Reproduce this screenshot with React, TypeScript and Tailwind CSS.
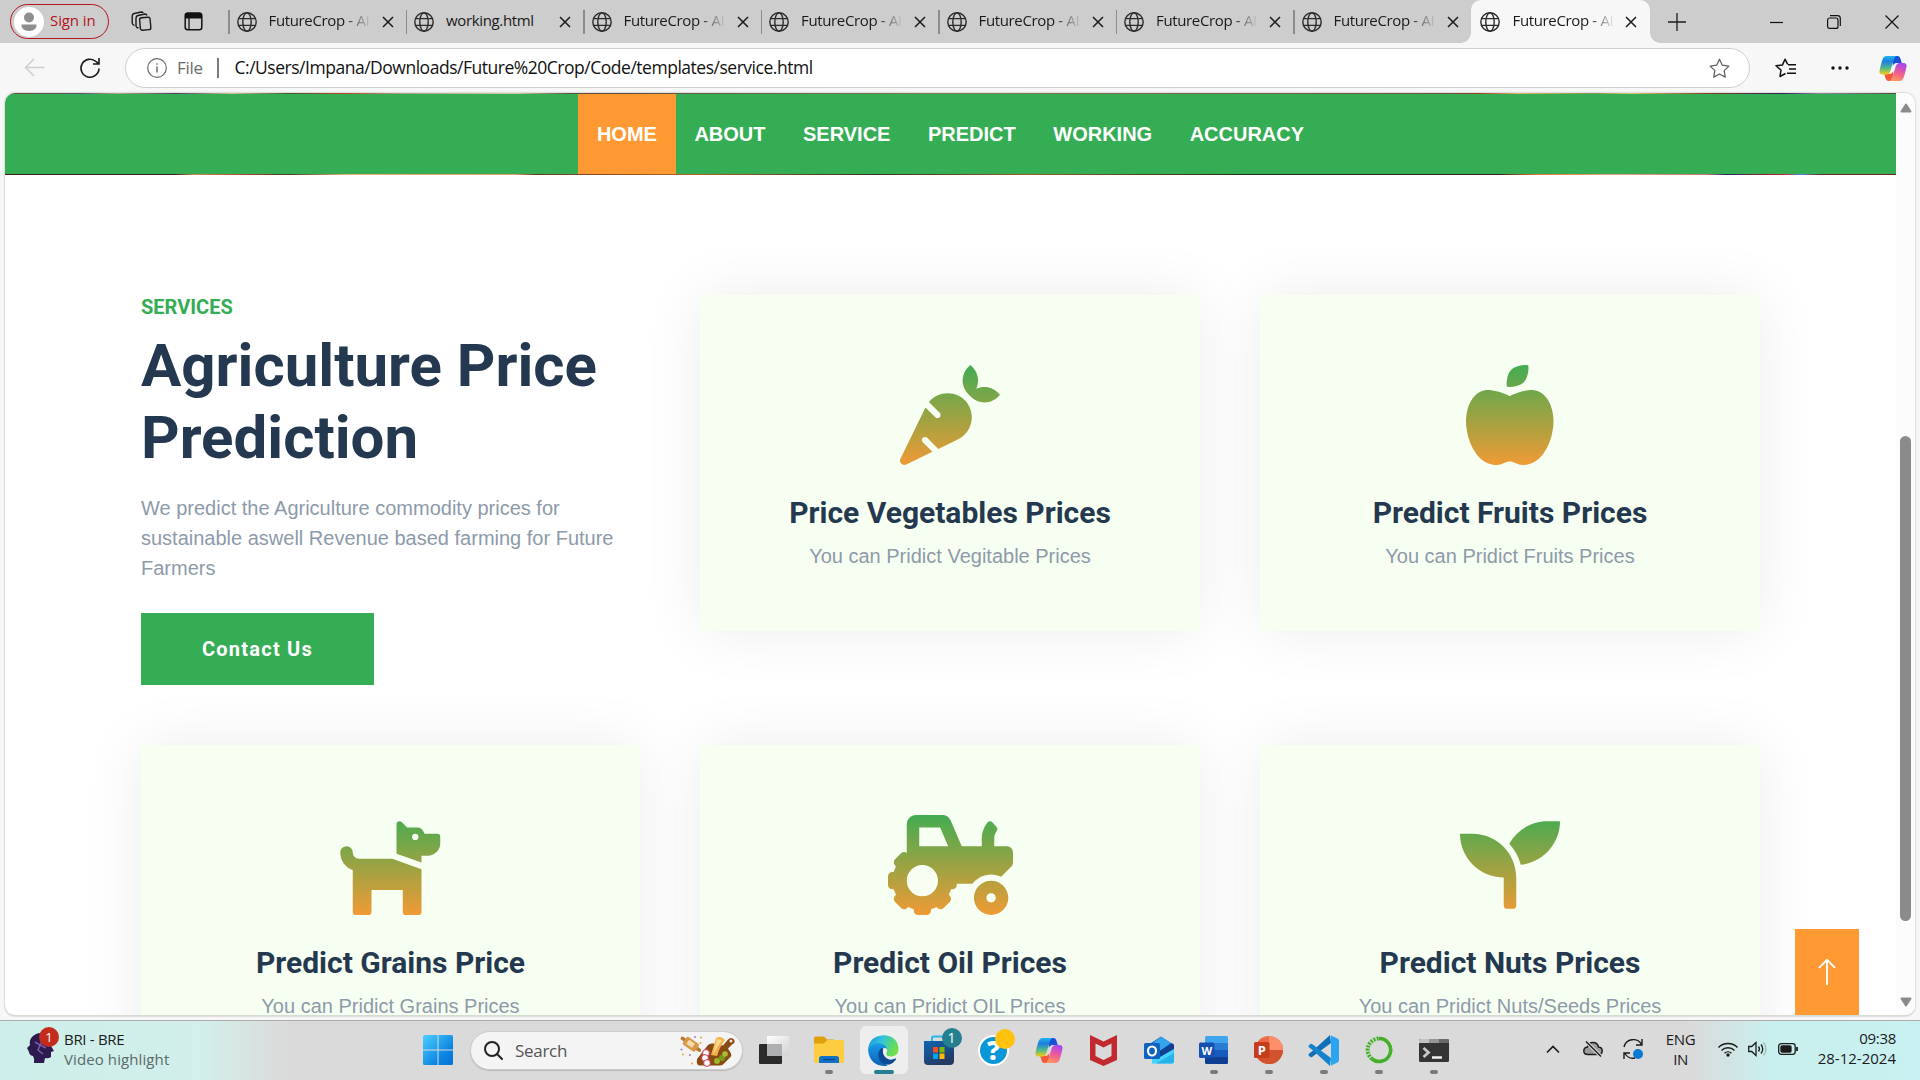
import React from "react";
import { FaCarrot, FaAppleAlt, FaDog, FaTractor, FaSeedling } from "react-icons/fa";
import { BsArrowUp } from "react-icons/bs";
import type { IconType } from "react-icons";

const UI = "font-['Open_Sans','Noto_Sans',sans-serif]";

function Globe() {
  return (
    <svg className="size-5 shrink-0" viewBox="0 0 20 20" fill="none" stroke="#2b2b2b" strokeWidth="1.4">
      <circle cx="10" cy="10" r="9.2" />
      <ellipse cx="10" cy="10" rx="4.2" ry="9.2" />
      <path d="M1.7 6.6h16.6M1.7 13.4h16.6" />
    </svg>
  );
}

function Cross() {
  return (
    <svg className="size-3 shrink-0" viewBox="0 0 12 12" stroke="#1a1a1a" strokeWidth="1.5">
      <path d="M1 1l10 10M11 1L1 11" />
    </svg>
  );
}

function Copilot({ id }: { id: string }) {
  return (
    <svg className="h-[27px] w-7 shrink-0" viewBox="0 0 28 27">
      <defs>
        <linearGradient id={id + "a"} x1="0" y1="0" x2="0" y2="1">
          <stop offset="0" stopColor="#1fb4f0" />
          <stop offset=".3" stopColor="#1c7fe0" />
          <stop offset=".65" stopColor="#4fb98a" />
          <stop offset="1" stopColor="#f8cc12" />
        </linearGradient>
        <linearGradient id={id + "b"} x1="0.6" y1="0" x2="0.3" y2="1">
          <stop offset="0" stopColor="#a648ee" />
          <stop offset=".5" stopColor="#ee5a97" />
          <stop offset="1" stopColor="#ff9a5c" />
        </linearGradient>
      </defs>
      <path d="M14 1h4.500q2 0 2.700 2l1.600 5h-5q-3 0-4 3z" fill="#1c4fd8" />
      <path d="M14 26H9.500q-2 0-2.700-2l-1.600-5h5q3 0 4-3z" fill="#f4593a" />
      <path d="M7.500 1H18q-2 0-3 3l-4 13q-.8 2.500-3.500 2.500H3.500Q0 19.500.5 16q.8-5 3-11.500Q4.600 1 7.500 1z" fill={`url(#${id}a)`} />
      <path d="M20.500 26H10q2 0 3-3l4-12.500Q17.800 8 20.500 8h4q3.500 0 3 3.500-.8 5-3 11.500-1.100 3-4 3z" fill={`url(#${id}b)`} />
    </svg>
  );
}

function TabBar() {
  const tabs = ["FutureCrop - AI", "working.html", "FutureCrop - AI", "FutureCrop - AI", "FutureCrop - AI", "FutureCrop - AI", "FutureCrop - AI"];
  return (
    <div className="flex h-[43px] shrink-0 items-center bg-[#cdcdcd]">
      <div className="ml-2.5 flex h-[35px] w-[99px] shrink-0 items-center rounded-full border-[1.5px] border-[#b3151b] pl-[3px]">
        <svg className="size-[30px] shrink-0" viewBox="0 0 30 30">
          <circle cx="15" cy="15" r="15" fill="#fff" />
          <circle cx="15" cy="10.500" r="5" fill="#8e8e8e" />
          <path d="M7.500 17.500h15q.5 6.500-7.500 6.500t-7.500-6.500z" fill="#8e8e8e" />
        </svg>
        <span className="mb-0.5 ml-1.5 text-[15px] tracking-[-0.1px] whitespace-nowrap text-[#b3151b]">Sign in</span>
      </div>
      <svg className="ml-[22px] size-[21px] shrink-0" viewBox="0 0 21 21" fill="none" stroke="#1b1b1b" strokeWidth="1.4">
        <rect x="9" y="6.500" width="10.500" height="12.500" rx="2" transform="rotate(-5 14 13)" />
        <path d="M7.500 17l-1.500-.5q-1-.5-1-2V7q0-2 2-2.500l7-1.500q1.500 0 2 1.500" />
        <path d="M3.500 14.500Q1.500 14 1.200 12V5q0-2 2-2.500l7-1.500q1.500 0 2 1" />
      </svg>
      <svg className="ml-8 h-[19px] w-[19px] shrink-0" viewBox="0 0 19 19">
        <rect x="1.200" y="1.200" width="16.600" height="16.600" rx="2.500" fill="none" stroke="#111" strokeWidth="1.500" />
        <path d="M1 6.500V3q0-2.500 2.500-2.500h12Q18 .5 18 3v3.500z" fill="#111" />
        <path d="M5 6v12" stroke="#111" strokeWidth="1.300" />
      </svg>
      <div className="ml-[25px] flex h-full items-center">
        {tabs.map((t, i) => (
          <div key={i} className="flex w-[177.500px] shrink-0 items-center">
            <div className="h-6 w-[1.500px] bg-[#8c8c8c]" />
            <div className="ml-[7px]">
              <Globe />
            </div>
            <span
              className={
                "mb-0.5 ml-3 w-[102px] overflow-hidden text-[15px] tracking-[-0.35px] whitespace-nowrap text-[#1a1a1a] " +
                (i === 1 ? "" : "[mask-image:linear-gradient(to_right,#000_74%,transparent_100%)]")
              }
            >
              {t}
            </span>
            <div className="ml-[11px]">
              <Cross />
            </div>
          </div>
        ))}
        <div className="relative flex h-full w-[179px] items-center rounded-t-[10px] bg-[#f7f7f7]">
          <div className="absolute bottom-0 -left-2.5 size-2.5 bg-[radial-gradient(circle_at_0_0,transparent_9.500px,#f7f7f7_10px)]" />
          <div className="absolute -right-2.5 bottom-0 size-2.5 bg-[radial-gradient(circle_at_100%_0,transparent_9.500px,#f7f7f7_10px)]" />
          <div className="ml-[9px]">
            <Globe />
          </div>
          <span className="mb-0.5 ml-[13px] w-[102px] overflow-hidden text-[15px] tracking-[-0.35px] whitespace-nowrap text-[#1a1a1a] [mask-image:linear-gradient(to_right,#000_74%,transparent_100%)]">
            FutureCrop - AI
          </span>
          <div className="ml-2.5">
            <Cross />
          </div>
        </div>
      </div>
      <svg className="ml-[18px] size-[18px] shrink-0" viewBox="0 0 18 18" stroke="#1b1b1b" strokeWidth="1.300">
        <path d="M9 0v18M0 9h18" />
      </svg>
      <svg className="ml-[84px] h-3.5 w-[13px] shrink-0" viewBox="0 0 13 14" stroke="#111" strokeWidth="1.200">
        <path d="M0 7.500h13" />
      </svg>
      <svg className="ml-11 size-3.5 shrink-0" viewBox="0 0 14 14" fill="none" stroke="#111" strokeWidth="1.200">
        <rect x=".6" y="3" width="10.400" height="10.400" rx="2" />
        <path d="M3 .7h7.500q2.800 0 2.800 2.800V11" />
      </svg>
      <svg className="ml-11 size-3.5 shrink-0" viewBox="0 0 14 14" stroke="#111" strokeWidth="1.200">
        <path d="M.5.5l13 13M13.500.5l-13 13" />
      </svg>
    </div>
  );
}

function Toolbar() {
  return (
    <div className="flex h-[50px] shrink-0 items-center bg-[#f7f7f7]">
      <svg className="ml-6 size-[21px]" viewBox="0 0 21 21" fill="none" stroke="#cfcfcf" strokeWidth="1.500">
        <path d="M20.500 9.500H1.500M10 1L1.500 9.500 10 18" />
      </svg>
      <svg className="ml-[34px] h-[22px] w-[22px]" viewBox="0 0 22 22" fill="none" stroke="#1a1a1a" strokeWidth="1.600">
        <path d="M20 11.500a9 9 0 1 1-3-7l2.500 2.200M20 1v6h-6" />
      </svg>
      <div className="ml-6 flex h-10 w-[1625px] items-center rounded-full border border-[#cfcfcf] bg-white">
        <svg className="ml-[21px] size-5" viewBox="0 0 20 20" fill="none" stroke="#6b6b6b" strokeWidth="1.200">
          <circle cx="10" cy="10" r="9.300" />
          <path d="M10 8.500V14.500M10 5.200v1.600" strokeWidth="1.500" />
        </svg>
        <span className="mb-px ml-2.5 w-[28px] text-[17px] tracking-[-0.3px] text-[#6b6b6b]">File</span>
        <div className="ml-3 h-5 w-[1.500px] bg-[#7b7b7b]" />
        <span className="mb-px ml-4 w-[1474px] text-[17.5px] tracking-[-0.48px] text-[#111]">
          C:/Users/Impana/Downloads/Future%20Crop/Code/templates/service.html
        </span>
        <svg className="size-[21px]" viewBox="0 0 20 20" fill="none" stroke="#5f5f5f" strokeWidth="1.200" strokeLinejoin="round">
          <path d="M10 1.200l2.700 5.700 6.200.8-4.500 4.300 1.100 6.200L10 15.200l-5.500 3 1.100-6.200L1.100 7.700l6.200-.8z" />
        </svg>
      </div>
      <svg className="ml-[25px] h-5 w-[21px]" viewBox="0 0 21 20" fill="none" stroke="#111" strokeWidth="1.500" strokeLinejoin="round">
        <path d="M10.500 15.500L5 18.500 6 12 1 7.800l6.500-.9L10 1.200l2.700 5.200M13 6.800h8M14 11h7M12 15.300h9" />
      </svg>
      <svg className="ml-[35px] h-4 w-[18px]" viewBox="0 0 18 16" fill="#111">
        <circle cx="2" cy="8" r="1.700" />
        <circle cx="9" cy="8" r="1.700" />
        <circle cx="16" cy="8" r="1.700" />
      </svg>
      <div className="ml-[30px]">
        <Copilot id="tb" />
      </div>
    </div>
  );
}

type Service = { Icon: IconType; size: string; title: string; text: string };

function ServiceCard({ Icon, size, title, text }: Service) {
  return (
    <div className="flex h-[336px] flex-col items-center bg-[#f7fff2] p-[60px] shadow-[0_0_56px_rgba(0,0,0,0.08)]">
      <div className="flex h-[120px] items-center">
        <Icon className={"h-[100px] shrink-0 overflow-visible [&_path]:fill-[url(#leaf)] " + size} />
      </div>
      <h4 className="mt-5 font-[Roboto,sans-serif] text-[30px] leading-9 font-bold whitespace-nowrap text-[#24394f]">{title}</h4>
      <p className="mt-2.5 text-xl leading-[30px] whitespace-nowrap text-[#8d9aaa]">{text}</p>
    </div>
  );
}

const services: Service[] = [
  { Icon: FaCarrot, size: "w-[100px]", title: "Price Vegetables Prices", text: "You can Pridict Vegitable Prices" },
  { Icon: FaAppleAlt, size: "w-[87.5px]", title: "Predict Fruits Prices", text: "You can Pridict Fruits Prices" },
  { Icon: FaDog, size: "w-[112.5px]", title: "Predict Grains Price", text: "You can Pridict Grains Prices" },
  { Icon: FaTractor, size: "w-[125px]", title: "Predict Oil Prices", text: "You can Pridict OIL Prices" },
  { Icon: FaSeedling, size: "w-[100px]", title: "Predict Nuts Prices", text: "You can Pridict Nuts/Seeds Prices" },
];

function Page() {
  const links = ["HOME", "ABOUT", "SERVICE", "PREDICT", "WORKING", "ACCURACY"];
  return (
    <div className="mr-[5px] ml-[5px] flex h-[923px] shrink-0 overflow-hidden rounded-[10px] border-b border-[#d5dcd2] bg-white font-['Liberation_Sans',Arial,sans-serif] shadow-[0_0_2px_rgba(0,0,0,0.35)]">
      <svg className="absolute size-0">
        <defs>
          <linearGradient id="leaf" gradientUnits="userSpaceOnUse" x1="0" y1="-45" x2="0" y2="557">
            <stop offset="0" stopColor="#34ad54" />
            <stop offset="1" stopColor="#ff9933" />
          </linearGradient>
        </defs>
      </svg>
      <div className="relative flex h-full w-[1891px] shrink-0 flex-col">
        <div className="h-px shrink-0 bg-[linear-gradient(to_right,#6b4c3c_0%,#556_4%,#b6a98a_6%,#4b3d5e_9%,#d2c08f_12%,#3f5a2c_15%,#c0452c_18%,#a7a48a_21%,#d8c9a0_27%,#5a4a3a_30%,#8a7a5a_50%,#6b5040_76%,#a03c22_78%,#e0b568_80%,#7f9a4b_84%,#d8ca70_86%,#8a3b22_90%,#2c2455_94%,#8a8aa0_96%,#5a4438_100%)]" />
        <nav className="flex h-20 shrink-0 justify-center bg-[#34ad54]">
          {links.map((l) => (
            <div
              key={l}
              className={"flex items-center px-[18.750px] pb-px text-xl font-bold text-white " + (l === "HOME" ? "bg-[#ff9933]" : "")}
            >
              {l}
            </div>
          ))}
        </nav>
        <div className="h-px shrink-0 bg-[linear-gradient(to_right,#3a1d14_0%,#3a1d14_9%,#c98a5a_10%,#a0462a_13%,#4a3a20_15%,#e6b27a_18%,#d9a070_27%,#6a3a20_28%,#b0662c_36%,#3a3020_46%,#96602a_54%,#1e2a14_66%,#3a1d14_79%,#e07a3a_81%,#e0a884_85%,#c97a6a_90%,#1c2c6a_91%,#cc2020_94%,#5a8ae0_95%,#6a2a20_96%,#6a2a20_100%)]" />
        <div className="grid grid-cols-[499px_500px_500px] gap-x-[60px] gap-y-[114px] pt-[120px] pl-[136px]">
          <div className="flex h-[336px] flex-col items-start">
            <h6 className="font-[Roboto,sans-serif] text-[20px] leading-6 font-bold text-[#34ad54]">SERVICES</h6>
            <h1 className="mt-[11px] font-[Roboto,sans-serif] text-[60px] leading-[72px] font-bold text-[#24394f]">Agriculture Price Prediction</h1>
            <p className="mt-[19px] text-xl leading-[30px] text-[#8d9aaa]">
              We predict the Agriculture commodity prices for sustainable aswell Revenue based farming for Future Farmers
            </p>
            <div className="mt-[30px] flex h-[72px] w-[233px] shrink-0 items-center justify-center bg-[#34ad54] font-[Roboto,sans-serif] text-xl font-bold tracking-[1.25px] text-white">
              Contact Us
            </div>
          </div>
          {services.map((s) => (
            <ServiceCard key={s.title} {...s} />
          ))}
        </div>
        <div className="absolute bottom-0 left-[1790px] flex h-[86px] w-16 items-center justify-center bg-[#ff9933] text-white">
          <BsArrowUp className="mr-px h-[32px] w-[30px]" />
        </div>
      </div>
      <div className="flex h-full flex-1 flex-col items-center bg-[#fcfcfc] pt-[10px]">
        <svg className="h-2.5 w-3 shrink-0" viewBox="0 0 12 10" fill="#8b8b8b" stroke="#8b8b8b" strokeLinejoin="round" strokeWidth="2">
          <path d="M6 1.500l4.500 7h-9z" />
        </svg>
        <div className="mt-[323px] h-[485px] w-[11px] shrink-0 rounded-full bg-[#8b8b8b]" />
        <svg className="mt-[76px] h-2.5 w-3 shrink-0" viewBox="0 0 12 10" fill="#8b8b8b" stroke="#8b8b8b" strokeLinejoin="round" strokeWidth="2">
          <path d="M6 8.500l4.500-7h-9z" />
        </svg>
      </div>
    </div>
  );
}

function StartLogo() {
  return (
    <svg className="size-[30px]" viewBox="0 0 30 30">
      <defs>
        <linearGradient id="win" gradientUnits="userSpaceOnUse" x1="0" y1="0" x2="30" y2="30">
          <stop offset="0" stopColor="#4bd0ff" />
          <stop offset=".7" stopColor="#0a82e0" />
          <stop offset="1" stopColor="#0675d4" />
        </linearGradient>
      </defs>
      <path d="M1.500 0H14.500V14.500H0V1.500Q0 0 1.500 0zM15.500 0H28.500Q30 0 30 1.500V14.500H15.500zM0 15.500H14.500V30H1.500Q0 30 0 28.500zM15.500 15.500H30V28.500Q30 30 28.500 30H15.500z" fill="url(#win)" />
    </svg>
  );
}

function SearchArt() {
  return (
    <svg className="h-[32px] w-[56px] shrink-0" viewBox="0 0 56 32">
      <g transform="rotate(35 11 9)">
        <rect x="-1" y="7.500" width="24" height="3.600" rx="1.800" fill="#b77a2a" />
        <rect x="3.500" y="4.500" width="15" height="9.500" rx="2" fill="#d69a49" />
        <rect x="7" y="6.500" width="7" height="5" fill="#f4dcae" />
      </g>
      <path d="M17 24l11-14q2-2 5-1.500l10 2 5-6q3-3 6 0 2 3-2 5l-4 4 3 5q1 2-1 4l-7 7q-1 1-3 1H20q-4 0-3-6z" fill="#8a4b12" />
      <circle cx="51" cy="6" r="1.500" fill="#e9e3dc" />
      <path d="M31 20l5-17q5-3 9 2-6 8-8 16z" fill="#f3b24c" />
      <path d="M33 19l4-15 5 1z" fill="#fbd68b" />
      <circle cx="26" cy="18" r="3.400" fill="#fff" stroke="#d8335f" />
      <circle cx="25" cy="23" r="3.400" fill="#fff" stroke="#d8335f" />
      <circle cx="27" cy="28" r="3.400" fill="#fff" stroke="#d8335f" />
      <circle cx="37" cy="26" r="3" fill="#9cb42a" />
      <circle cx="42" cy="23" r="3" fill="#7a9a1c" />
      <circle cx="45" cy="19" r="2.800" fill="#a9be36" />
      <g fill="#e0a63c">
        <circle cx="21" cy="2.500" r="1" />
        <circle cx="20.500" cy="8" r="1" />
        <circle cx="3" cy="19.500" r="1" />
        <circle cx="12" cy="28.500" r="1" />
      </g>
      <g fill="#a78bc0">
        <circle cx="15" cy="2" r="1.100" />
        <circle cx="1.500" cy="14.500" r="1.100" />
        <circle cx="10" cy="20" r="1.100" />
      </g>
    </svg>
  );
}

function EdgeLogo() {
  return (
    <svg className="size-[31px]" viewBox="0 0 31 31">
      <defs>
        <linearGradient id="ed1" x1="0" y1="0" x2="1" y2="0.400">
          <stop offset="0" stopColor="#1b8fdc" />
          <stop offset=".45" stopColor="#2fc3dc" />
          <stop offset="1" stopColor="#6be04a" />
        </linearGradient>
        <linearGradient id="ed2" x1="0" y1="0" x2="0" y2="1">
          <stop offset="0" stopColor="#1a9be8" />
          <stop offset="1" stopColor="#0c62b8" />
        </linearGradient>
      </defs>
      <path d="M0 15Q1 1 15.500.3 29 1 30.500 13q0 8-7 8.500-6 0-5-3.500 2-4-2-6-7-3-16.500 3z" fill="url(#ed1)" />
      <path d="M0 15Q4 7 12 8.500q6 1 7 5-5-2-6.500 3-1 6 3 10.500l4 4Q2 32 0 15z" fill="url(#ed2)" />
      <path d="M12.500 14q-4 5-1 11 4 5.500 10 4.500 4-1.200 6.500-5 .5-1.200-.8-.9-5 2.400-9-.6-4.500-4-3-9.500-1-1-2.700.5z" fill="#0d4a94" />
    </svg>
  );
}

function StoreLogo() {
  return (
    <div className="relative">
      <svg className="h-[31px] w-[30px]" viewBox="0 0 30 31">
        <defs>
          <linearGradient id="st" x1="0" y1="0" x2="0.500" y2="1">
            <stop offset="0" stopColor="#0c65b4" />
            <stop offset="1" stopColor="#243a63" />
          </linearGradient>
        </defs>
        <path d="M8 7V3q0-1.500 1.500-1.500h11Q22 1.500 22 3v4" fill="none" stroke="#28b5ee" strokeWidth="2" />
        <path d="M0 6H30V26q0 4-4 4H4q-4 0-4-4z" fill="url(#st)" />
        <path d="M9 12h5v5.500H9z" fill="#f25022" />
        <path d="M15.500 12h5v5.500h-5z" fill="#7fba00" />
        <path d="M9 18.500h5V24H9z" fill="#00a4ef" />
        <path d="M15.500 18.500h5V24h-5z" fill="#ffb900" />
      </svg>
      <div className="absolute -top-[7px] -right-[8px] flex size-5 items-center justify-center rounded-full bg-[#24808f] text-[14px] leading-none text-white">1</div>
    </div>
  );
}

function Dock({ children, active, dot }: { children: React.ReactNode; active?: boolean; dot?: boolean }) {
  return (
    <div className="flex h-full w-[55px] shrink-0 items-start justify-center pt-[5px]">
      <div className={"relative flex h-12 w-12 items-center justify-center rounded-md " + (active ? "bg-[#eeeeee]" : "")}>
        {children}
        {active && <div className="absolute bottom-0 left-3.5 h-1 w-5 rounded-full bg-[#24808f]" />}
        {dot && <div className="absolute bottom-0 left-5 h-1 w-2 rounded-full bg-[#7b7b7b]" />}
      </div>
    </div>
  );
}

function Taskbar() {
  return (
    <div className="relative flex h-[60px] shrink-0 border-t border-[#adadad] bg-[linear-gradient(to_right,#cdeeea_0px,#d2efea_200px,#dadada_290px,#dadada_1690px,#c9efee_1770px,#c9f1f1_1920px)]">
      <div className="flex w-[410px] shrink-0 items-start pt-[9px] pl-[27px]">
        <div className="relative">
          <svg className="h-[34px] w-7" viewBox="0 0 28 34" fill="#2d1a4e">
            <path d="M5 7q6-6 13-3 7 3 6 12l3 5-3 1v5q-3 2-6 1l-1 5H7q1-4-1-7-4-1-4-4l-2-4 3-3q-1-5 2-8z" />
            <path d="M8 12l5 3-2 5 5 4M16 10l-3 5 6 3" stroke="#7a5cae" fill="none" strokeWidth="1.500" />
          </svg>
          <div className="absolute -top-[3px] left-3 flex size-5 items-center justify-center rounded-full bg-[#c42b1c] text-[13px] leading-none text-white">1</div>
        </div>
        <div className="-mt-px ml-[9px] flex flex-col text-[15px] leading-5 whitespace-nowrap">
          <span className="tracking-[-0.3px] text-[#1b1b1b]">BRI - BRE</span>
          <span className="tracking-[0.1px] text-[#5b6a6a]">Video highlight</span>
        </div>
      </div>
      <Dock>
        <StartLogo />
      </Dock>
      <div className="mt-2.5 ml-[5px] flex h-[39px] w-[273px] shrink-0 items-center rounded-full border border-[#cbcbcb] bg-[#f4f4f4] shadow-[0_1px_1px_rgba(0,0,0,0.15)]">
        <svg className="ml-[13px] size-[19px] shrink-0" viewBox="0 0 19 19" fill="none" stroke="#222" strokeWidth="2" strokeLinecap="round">
          <circle cx="8" cy="8" r="7" />
          <path d="M13 13l5 5" />
        </svg>
        <span className="ml-3 w-[165px] shrink-0 text-[17px] tracking-[-0.3px] text-[#555]">Search</span>
        <SearchArt />
      </div>
      <div className="w-[3px] shrink-0" />
      <Dock>
        <svg className="size-[30px]" viewBox="0 0 30 30">
          <defs>
            <linearGradient id="tv" x1="0" y1="0" x2="1" y2="1">
              <stop offset="0" stopColor="#fff" />
              <stop offset="1" stopColor="#d2d2d2" />
            </linearGradient>
          </defs>
          <rect x="0" y="9" width="23" height="20" rx="1" fill="#2b2b2b" />
          <rect x="8" y="1" width="22" height="20" rx="1" fill="url(#tv)" />
          <path d="M8 9h15v12H8z" fill="#aeb0b1" />
        </svg>
      </Dock>
      <Dock dot>
        <svg className="h-7 w-[30px]" viewBox="0 0 30 28">
          <path d="M0 4V2Q0 .5 1.500.5H10l3 3H20V12H0z" fill="#dfa00c" />
          <path d="M0 7.500h9.500l4-3.500H28.500Q30 4 30 5.500v20Q30 27 28.500 27h-27Q0 27 0 25.500z" fill="#fdcc40" />
          <path d="M5 27v-4.500Q5 20 7.500 20h15q2.500 0 2.500 2.500V27z" fill="#1173c6" />
          <path d="M9.500 23.500h11" stroke="#0a4c91" strokeWidth="1.500" strokeLinecap="round" />
        </svg>
      </Dock>
      <Dock active>
        <EdgeLogo />
      </Dock>
      <Dock>
        <StoreLogo />
      </Dock>
      <Dock>
        <div className="relative flex size-[31px] items-center justify-center rounded-full border-2 border-white bg-[#0a97d9] text-[26px] leading-none font-extrabold text-white">
          ?
          <div className="absolute -top-[8px] -right-[8px] size-5 rounded-full bg-[#ffc20e]" />
        </div>
      </Dock>
      <Dock>
        <Copilot id="dk" />
      </Dock>
      <Dock>
        <svg className="h-[31px] w-[27px]" viewBox="0 0 27 31" fill="#c1292e">
          <path d="M0 0l13.500 6.500L27 0v25l-13.500 6L0 25zM5.500 8.500V21l8 4 8-4V8.500l-8 4z" fillRule="evenodd" />
        </svg>
      </Dock>
      <Dock>
        <svg className="h-7 w-[30px]" viewBox="0 0 30 28">
          <path d="M4 9L17 .5 30 9v10H4z" fill="#1173c8" />
          <path d="M10 6l7-5 10 6-11 8z" fill="#35a4ec" />
          <path d="M30 9v16q0 2.500-2.500 2.500H8V20L30 9z" fill="#42d2fb" />
          <path d="M14 16L28 7l2 2v4l-14 8z" fill="#123f92" />
          <path d="M12 27.500L30 17v8q0 2.500-2.500 2.500z" fill="#27b3ea" />
          <rect y="7" width="16" height="16" rx="1.500" fill="#0f62bd" />
          <ellipse cx="8" cy="15" rx="4" ry="4.500" fill="none" stroke="#fff" strokeWidth="2.200" />
        </svg>
      </Dock>
      <Dock dot>
        <div className="relative h-7 w-[29px]">
          <svg className="h-7 w-[29px]" viewBox="0 0 29 28">
            <path d="M6 7V1.500Q6 0 7.500 0h20Q29 0 29 1.500V7z" fill="#41a5ee" />
            <path d="M6 7h23v7H6z" fill="#2b7cd3" />
            <path d="M6 14h23v7H6z" fill="#185abd" />
            <path d="M6 21h23v5.500q0 1.500-1.500 1.500h-20Q6 28 6 26.500z" fill="#103f91" />
            <rect y="6.500" width="15.500" height="15.500" rx="1.500" fill="#1650b0" />
          </svg>
          <span className="absolute top-[6.500px] left-0 w-[15.500px] text-center text-[11px] leading-[15.500px] font-bold text-white">W</span>
        </div>
      </Dock>
      <Dock dot>
        <div className="relative h-7 w-[29px]">
          <svg className="h-7 w-[29px]" viewBox="0 0 29 28">
            <circle cx="15" cy="14" r="14" fill="#ed6c47" />
            <path d="M15 0a14 14 0 0 1 14 14H15z" fill="#ff8f6b" />
            <path d="M29 14a14 14 0 0 1-28 0z" fill="#d35230" />
            <rect y="6" width="15.500" height="16" rx="1.500" fill="#c43e1c" />
          </svg>
          <span className="absolute top-[6.500px] left-0 w-[15.500px] text-center text-[13px] leading-[15.500px] font-bold text-white">P</span>
        </div>
      </Dock>
      <Dock dot>
        <svg className="size-[31px]" viewBox="0 0 31 31">
          <path d="M22 0L4.500 16l-3.600 2.800Q0 19.500.8 20.500l1.500 1.500q.8.600 1.700 0L23 8z" fill="#0f6fb8" />
          <path d="M22 31L4.500 15 .9 12.200Q0 11.500.8 10.500L2.300 9q.8-.6 1.700 0L23 23z" fill="#1583cc" />
          <path d="M22 0l7.500 3.500Q31 4.200 31 6v19q0 1.800-1.500 2.500L22 31q1 0 1-2V2q0-2-1-2z" fill="#2ba5f2" />
        </svg>
      </Dock>
      <Dock dot>
        <svg className="size-[28px]" viewBox="0 0 28 28" fill="none" stroke="#44b02a">
          <path d="M14 2.500a11.500 11.500 0 1 1-7 20.500" strokeWidth="3.600" />
          <path d="M7 23A11.500 11.500 0 0 1 14 2.500" strokeWidth="4" strokeDasharray="2 1.200" />
        </svg>
      </Dock>
      <Dock dot>
        <svg className="h-[23px] w-[30px]" viewBox="0 0 30 23">
          <rect width="30" height="23" rx="1.500" fill="#353535" />
          <path d="M0 4V1.500Q0 0 1.500 0H10v4z" fill="#c4c4c4" />
          <path d="M10 0h10v4H10z" fill="#969696" />
          <path d="M20 0h8.500Q30 0 30 1.500V4H20z" fill="#6a6a6a" />
          <path d="M4.500 9l5 4.500-5 4.500" fill="none" stroke="#c8c8c8" strokeWidth="2.800" />
          <path d="M13 18.500h10" stroke="#f2f2f2" strokeWidth="2.500" />
        </svg>
      </Dock>
      <div className="ml-[85px] flex flex-1 items-center pb-[3px]">
        <svg className="h-3 w-3.5 shrink-0" viewBox="0 0 14 12" fill="none" stroke="#1b1b1b" strokeWidth="1.700">
          <path d="M1 9.500l6-6 6 6" />
        </svg>
        <svg className="ml-[23px] h-4 w-5 shrink-0" viewBox="0 0 20 16" fill="none" stroke="#1b1b1b" strokeWidth="1.400">
          <path d="M5 13.500Q.8 13.500.8 10T4.500 6Q5.500 1.500 10 1.500T15.500 6Q19.200 6.200 19.200 10T15 13.500z" fill="#9b9b9b" />
          <path d="M3 .5l15 15" stroke="#dadada" strokeWidth="3.500" />
          <path d="M3 .5l15 15" />
        </svg>
        <svg className="ml-5 size-5 shrink-0" viewBox="0 0 20 20" fill="none" stroke="#1b1b1b" strokeWidth="1.400">
          <path d="M1 8a9.500 9.500 0 0 1 17.500-2.500M19 0v6h-6M12 19a9 9 0 0 1-10-4.500M1 20v-6h6" />
          <circle cx="15" cy="15" r="5" fill="#0b78d4" stroke="none" />
        </svg>
        <div className="ml-[22px] w-[31px] text-center text-[15px] leading-5 tracking-[-0.4px] text-[#1b1b1b]">
          ENG
          <br />
          IN
        </div>
        <svg className="ml-[22px] h-[15px] w-5 shrink-0" viewBox="0 0 20 15" fill="none" stroke="#1b1b1b" strokeWidth="1.400">
          <path d="M.5 5.500a13.400 13.400 0 0 1 19 0M3.500 8.500a9.200 9.200 0 0 1 13 0M6.500 11.300a5 5 0 0 1 7 0" />
          <circle cx="10" cy="13" r="1.700" fill="#1b1b1b" stroke="none" />
        </svg>
        <svg className="ml-2.5 h-4 w-5 shrink-0" viewBox="0 0 20 16" fill="none" stroke="#1b1b1b" strokeWidth="1.300">
          <path d="M.7 5.500h3L8 1.500v13l-4.300-4h-3z" />
          <path d="M10.500 5.500q2 2.500 0 5M13 3.500q3.500 4.500 0 9" />
          <path d="M15.500 1.500q5 6.500 0 13" stroke="#9db9b9" />
        </svg>
        <svg className="ml-2.5 h-3 w-5 shrink-0" viewBox="0 0 20 12" fill="none" stroke="#1b1b1b" strokeWidth="1.300">
          <rect x=".7" y=".7" width="16.500" height="10.600" rx="2.500" />
          <rect x="3" y="3" width="10" height="6" rx="1" fill="#1b1b1b" />
          <path d="M19 4v4" strokeWidth="1.800" />
        </svg>
        <div className="mr-6 ml-auto pb-0.5 text-right text-[15px] leading-5 whitespace-nowrap text-[#1b1b1b]">
          <span className="tracking-[-0.3px]">09:38</span>
          <br />
          28-12-2024
        </div>
      </div>
    </div>
  );
}

export default function App() {
  return (
    <div className={"flex h-[1080px] w-[1920px] flex-col overflow-hidden bg-[#f7f7f7] " + UI}>
      <TabBar />
      <Toolbar />
      <Page />
      <div className="h-1 shrink-0" />
      <Taskbar />
    </div>
  );
}
